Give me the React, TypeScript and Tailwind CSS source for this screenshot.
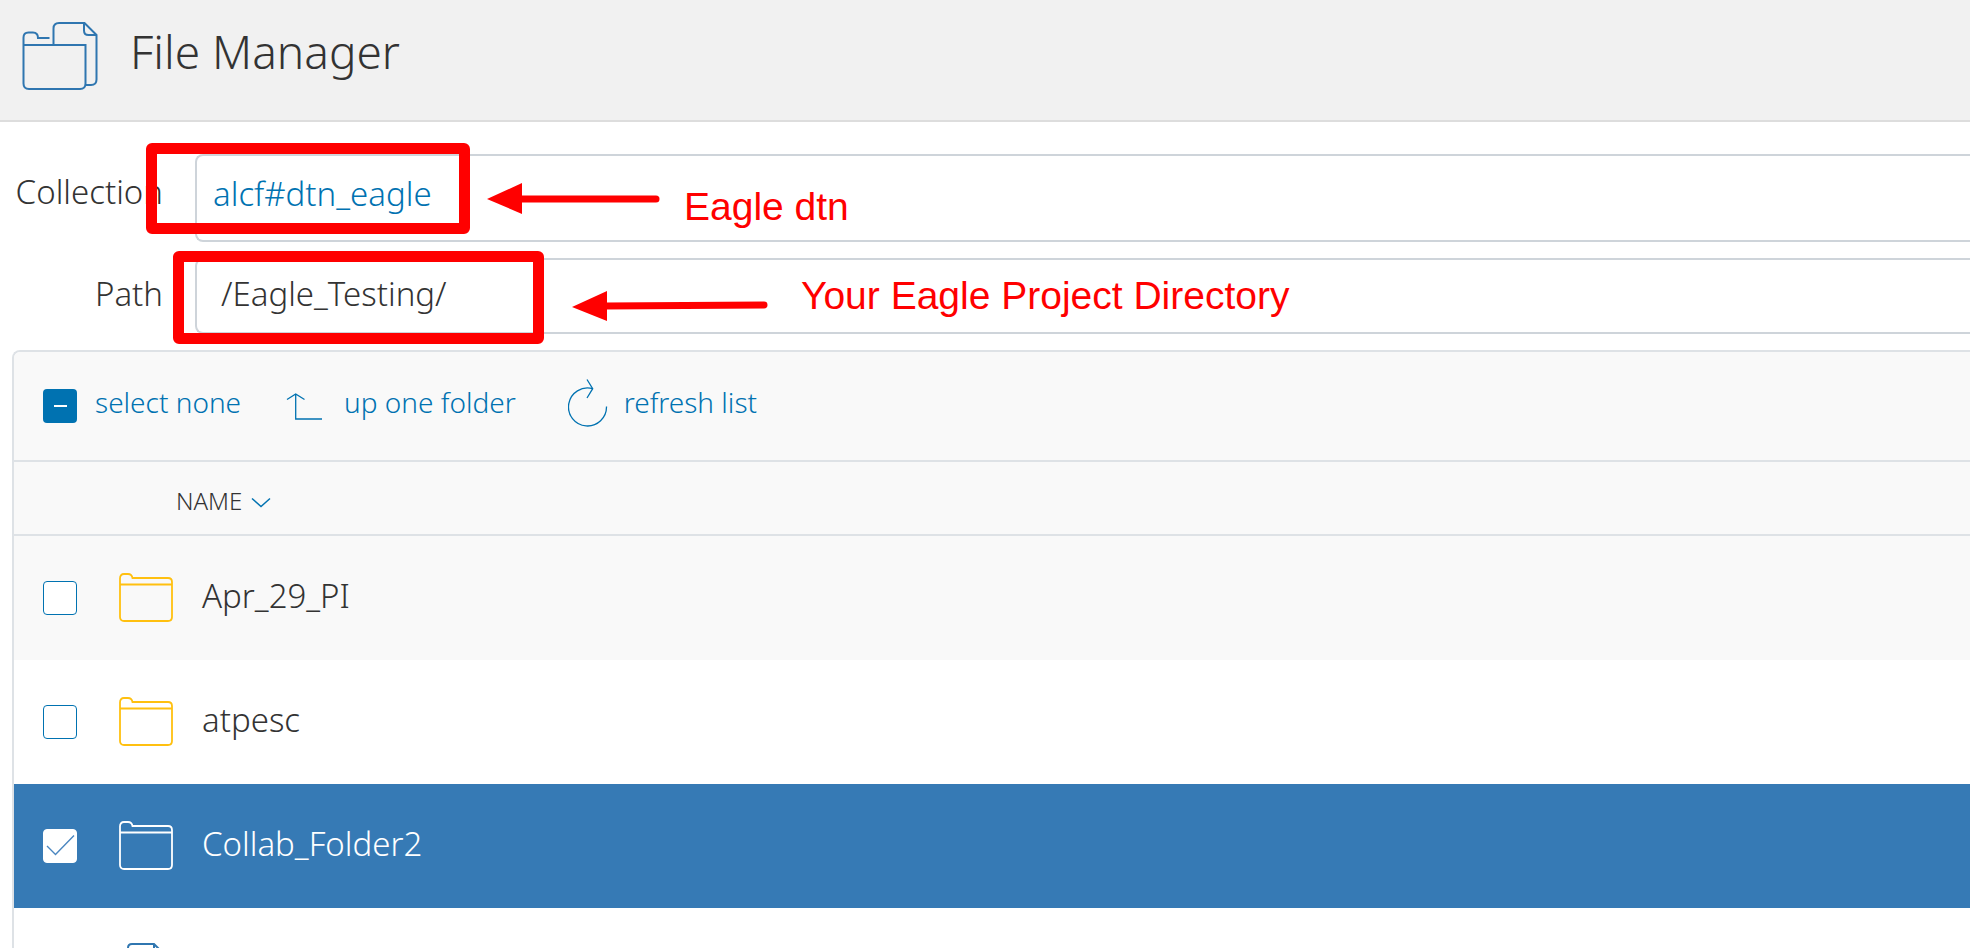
import { useState } from 'react';

type IconProps = { className?: string };

function FileManagerIcon({ className }: IconProps) {
  return (
    <svg viewBox="0 0 76 70" fill="none" stroke="#2f76b0" strokeWidth="2" className={className} aria-hidden="true">
      <path d="M27.500 17H16c0-3.500-2-5.500-5-5.500H6.500c-3.500 0-5 2-5 5V62.500c0 3.500 2 5.500 5.500 5.500h51c3.500 0 5.500-2 5.500-5.500V24h-62" />
      <path d="M31.500 24V7.500c0-3.500 2-5.500 5.500-5.500h25.500L74.500 14v44.500c0 3.500-2 5.500-5.500 5.500h-5.500" />
      <path d="M62 2v7.500c0 3 1.500 4.500 4.500 4.500h8" />
    </svg>
  );
}

function FolderIcon({ className }: IconProps) {
  return (
    <svg viewBox="0 0 54 50" fill="none" stroke="currentColor" strokeWidth="1.800" className={className} aria-hidden="true">
      <path d="M1 11.500V5.500C1 2.500 2.500 1 5 1h4c3 0 4 1.500 4.500 4H49c2.500 0 4 1.500 4 4v35c0 2.500-1.500 4-4 4H5c-2.500 0-4-1.500-4-4V11.500h52" />
    </svg>
  );
}

function FileIcon({ className }: IconProps) {
  return (
    <svg viewBox="0 0 42 54" fill="none" stroke="#2f76b0" strokeWidth="2" className={className} aria-hidden="true">
      <path d="M1 5c0-2.500 1.500-4 4-4h22l14 14v34c0 2.500-1.500 4-4 4H5c-2.500 0-4-1.500-4-4z" />
      <path d="M27 1v10c0 2.500 1.500 4 4 4h10" />
    </svg>
  );
}

function UpIcon({ className }: IconProps) {
  return (
    <svg viewBox="0 0 36 28" fill="none" stroke="currentColor" strokeWidth="1.300" className={className} aria-hidden="true">
      <path d="M1 7.500L9.700 2l8.800 5.500M9.700 2v25H36" />
    </svg>
  );
}

function RefreshIcon({ className }: IconProps) {
  return (
    <svg viewBox="0 0 40 48" fill="none" stroke="currentColor" strokeWidth="1.300" className={className} aria-hidden="true">
      <path d="M38.500 27.500A19 19 0 1 1 24.700 9.700" />
      <path d="M19 .5l5.700 9.200L19 19" />
    </svg>
  );
}

type BoxProps = { label: string; checked: boolean; onChange: () => void };

function SelectBox({ label, checked, onChange }: BoxProps) {
  return (
    <label className="relative block size-[34px]">
      <input
        type="checkbox"
        aria-label={label}
        checked={checked}
        onChange={onChange}
        className="block size-[34px] appearance-none rounded border border-[#0072b1] bg-white checked:border-white"
      />
      {checked && (
        <svg viewBox="0 0 34 34" fill="none" stroke="#4a86c0" strokeWidth="1.400" className="pointer-events-none absolute inset-0" aria-hidden="true">
          <path d="M4 17l8.500 8.500L31 6.500" />
        </svg>
      )}
    </label>
  );
}

type Entry = { id: string; name: string; kind: 'folder' | 'file' };

const entries: Entry[] = [
  { id: 'apr', name: 'Apr_29_PI', kind: 'folder' },
  { id: 'atpesc', name: 'atpesc', kind: 'folder' },
  { id: 'collab', name: 'Collab_Folder2', kind: 'folder' },
  { id: 'file', name: '', kind: 'file' },
];

function Annotations() {
  return (
    <div className="pointer-events-none absolute inset-0 font-['Liberation_Sans',Arial,sans-serif] text-[39px] font-normal leading-none text-[#ff0000]">
      <div className="absolute left-[146px] top-[143px] h-[91px] w-[324px] rounded-md border-[11px] border-[#ff0000]" />
      <div className="absolute left-[173px] top-[251px] h-[93px] w-[371px] rounded-md border-[11px] border-[#ff0000]" />
      <svg className="absolute left-[487px] top-[182px] h-[34px] w-[174px]" viewBox="0 0 174 34" aria-hidden="true">
        <path d="M0 17L35 1v31z" fill="#ff0000" />
        <path d="M34 17h135" stroke="#ff0000" strokeWidth="7" strokeLinecap="round" />
      </svg>
      <svg className="absolute left-[572px] top-[288px] h-[36px] w-[196px]" viewBox="0 0 196 36" aria-hidden="true">
        <path d="M0 19L35 3v30z" fill="#ff0000" />
        <path d="M34 18l158-1" stroke="#ff0000" strokeWidth="7" strokeLinecap="round" />
      </svg>
      <p className="absolute left-[684px] top-[187px] whitespace-nowrap">Eagle dtn</p>
      <p className="absolute left-[801px] top-[276px] whitespace-nowrap">Your Eagle Project Directory</p>
    </div>
  );
}

export default function App() {
  const [selected, setSelected] = useState<string[]>(['collab']);
  const toggle = (id: string) =>
    setSelected((ids) => (ids.includes(id) ? ids.filter((i) => i !== id) : [...ids, id]));

  return (
    <div className="relative h-screen overflow-hidden bg-white font-['Noto_Sans',sans-serif] font-light text-[#333]">
      <header className="flex h-[122px] items-start gap-8 border-b-2 border-[#ddd] bg-[#f1f1f1] pl-[22px] pt-[21px]">
        <FileManagerIcon className="h-[70px] w-[76px]" />
        <h1 className="text-[46px] leading-[60px]">File Manager</h1>
      </header>

      <main className="pl-3 pt-8">
        <div className="flex flex-col gap-4 text-[33px]">
          <div className="flex h-[88px] items-stretch gap-8">
            <label htmlFor="collection" className="w-[151px] pt-[15px] text-right leading-[46px]">Collection</label>
            <input
              id="collection"
              defaultValue="alcf#dtn_eagle"
              className="min-w-0 flex-1 rounded-l-lg border-2 border-r-0 border-[#ced4da] bg-white pb-2 pl-4 text-[#0072b1]"
            />
          </div>
          <div className="flex h-[76px] items-stretch gap-8">
            <label htmlFor="path" className="w-[151px] pt-[13px] text-right leading-[46px]">Path</label>
            <input
              id="path"
              defaultValue="/Eagle_Testing/"
              className="min-w-0 flex-1 rounded-l-lg border-2 border-r-0 border-[#ced4da] bg-white pb-1 pl-6"
            />
          </div>
        </div>

        <section className="mt-4 rounded-tl-lg border-2 border-b-0 border-r-0 border-[#dee2e6]">
          <div className="flex h-[110px] items-center rounded-tl-md border-b-2 border-[#dee2e6] bg-[#f9f9f9] pl-[29px] text-[28px] text-[#0072b1]">
            <button type="button" onClick={() => setSelected([])} className="flex items-center gap-[18px]">
              <span className="flex size-[34px] items-center justify-center rounded bg-[#0072b1]">
                <span className="h-[2px] w-[13px] bg-white" />
              </span>
              <span className="pb-2">select none</span>
            </button>
            <button type="button" className="ml-[45px] flex items-center gap-[22px]">
              <UpIcon className="h-[28px] w-[36px]" />
              <span className="pb-2">up one folder</span>
            </button>
            <button type="button" className="ml-[52px] flex items-center gap-4">
              <RefreshIcon className="mb-1.5 h-[48px] w-[40px]" />
              <span className="pb-2">refresh list</span>
            </button>
          </div>

          <table className="w-full border-separate border-spacing-0 text-left">
            <thead>
              <tr className="h-[74px] bg-[#f9f9f9]">
                <th colSpan={3} scope="col" className="border-b-2 border-[#dee2e6] p-0 pl-[162px] font-light">
                  <button type="button" className="flex items-center gap-[9px] pt-1.5 text-[24px]">
                    NAME
                    <svg viewBox="0 0 20 12" fill="none" stroke="#0072b1" strokeWidth="1.500" className="mt-1 h-[12px] w-[20px]" aria-hidden="true">
                      <path d="M1 1.500l9 8 9-8" />
                    </svg>
                  </button>
                </th>
              </tr>
            </thead>
            <tbody>
              {entries.map((entry) => {
                const on = selected.includes(entry.id);
                return (
                  <tr key={entry.id} className={on ? 'h-[124px] bg-[#367ab5] text-white' : 'h-[124px] odd:bg-[#f9f9f9]'}>
                    <td className="w-[105px] p-0 pl-[29px]">
                      <SelectBox label={entry.name || 'File'} checked={on} onChange={() => toggle(entry.id)} />
                    </td>
                    <td className="w-[83px] p-0">
                      {entry.kind === 'folder' ? (
                        <FolderIcon className={on ? 'h-[50px] w-[54px] text-white' : 'h-[50px] w-[54px] text-[#ffc010]'} />
                      ) : (
                        <FileIcon className="ml-2 h-[54px] w-[42px]" />
                      )}
                    </td>
                    <td className="p-0 pb-1 text-[33px]">{entry.name}</td>
                  </tr>
                );
              })}
            </tbody>
          </table>
        </section>
      </main>

      <Annotations />
    </div>
  );
}
